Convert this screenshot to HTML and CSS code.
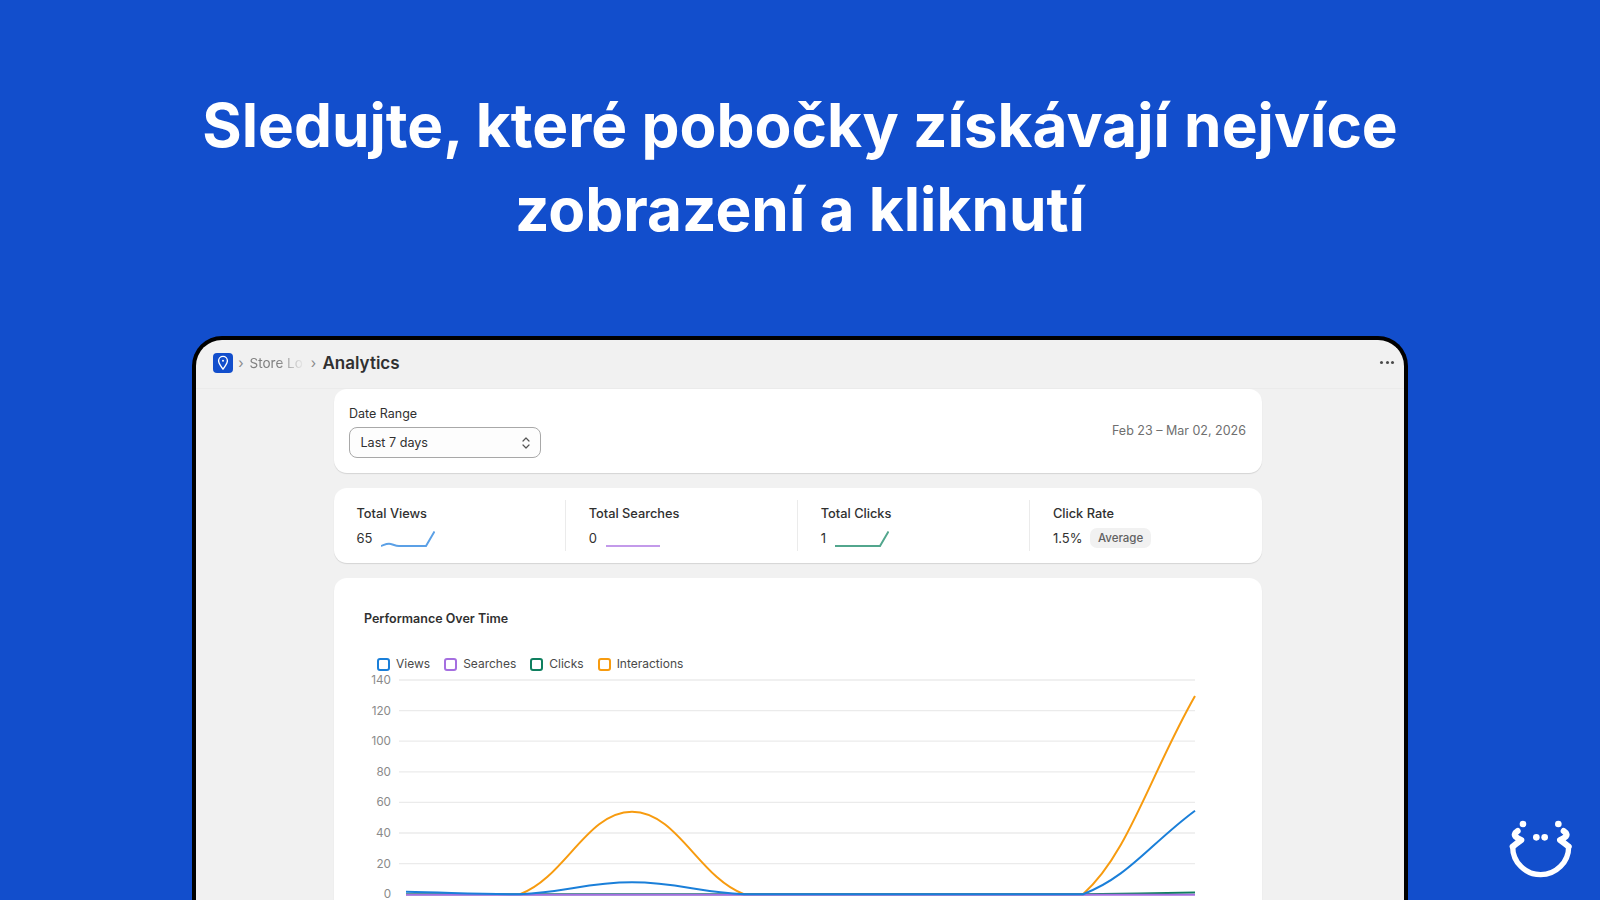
FILE: index.html
```html
<!DOCTYPE html>
<html lang="cs">
<head>
<meta charset="utf-8">
<title>Analytics</title>
<link rel="stylesheet" href="styles.css">
</head>
<body>
<h1 class="headline">Sledujte, které pobočky získávají nejvíce<br>zobrazení a kliknutí</h1>
<div class="window">
  <header class="topbar">
    <span class="app-icon">
      <svg viewBox="0 0 20 20" width="20" height="20"><path d="M10 16.2 C8 13.2 5.6 10.6 5.6 7.8 A4.4 4.4 0 0 1 14.4 7.8 C14.4 10.6 12 13.2 10 16.2 Z" fill="none" stroke="#fff" stroke-width="1.4" stroke-linejoin="round"/><circle cx="10" cy="7.8" r="1" fill="#fff"/></svg>
    </span>
    <span class="crumb-sep crumb-sep-first">›</span>
    <span class="crumb">Store Lo</span>
    <span class="crumb-sep">›</span>
    <span class="crumb-current">Analytics</span>
    <span class="more"><i></i><i></i><i></i></span>
  </header>
  <main class="content">
    <section class="card date-card">
      <div>
        <div class="field-label">Date Range</div>
        <div class="select">
          <span>Last 7 days</span>
          <svg viewBox="0 0 10 16" width="10" height="16"><path d="M2 6 L5 3 L8 6 M2 10 L5 13 L8 10" fill="none" stroke="#555" stroke-width="1.2" stroke-linecap="round" stroke-linejoin="round"/></svg>
        </div>
      </div>
      <div class="date-text">Feb 23 – Mar 02, 2026</div>
    </section>
    <section class="card stats">
      <div class="stat">
        <div class="stat-title">Total Views</div>
        <div class="stat-row"><span>65</span>
          <svg class="spark" viewBox="0 0 54 16" width="54" height="16"><path d="M0 15 C3 14 5 12.8 8 12.8 C11 12.8 14 15 18 15 L45 15 L53.5 0.5" fill="none" stroke="#5ba0e6" stroke-width="2"/></svg>
        </div>
      </div>
      <div class="stat">
        <div class="stat-title">Total Searches</div>
        <div class="stat-row"><span>0</span>
          <svg class="spark" viewBox="0 0 54 16" width="54" height="16"><path d="M0 15 L54 15" fill="none" stroke="#c39aea" stroke-width="2"/></svg>
        </div>
      </div>
      <div class="stat">
        <div class="stat-title">Total Clicks</div>
        <div class="stat-row"><span>1</span>
          <svg class="spark" viewBox="0 0 54 16" width="54" height="16"><path d="M0 15 L45 15 L53.5 0.5" fill="none" stroke="#52a68d" stroke-width="2"/></svg>
        </div>
      </div>
      <div class="stat">
        <div class="stat-title">Click Rate</div>
        <div class="stat-row"><span>1.5%</span><span class="badge">Average</span></div>
      </div>
    </section>
    <section class="card chart-card">
      <h2 class="chart-title">Performance Over Time</h2>
      <div class="legend">
        <span class="legend-item"><i class="box box-views"></i><span class="legend-text">Views</span></span>
        <span class="legend-item"><i class="box box-searches"></i><span class="legend-text">Searches</span></span>
        <span class="legend-item"><i class="box box-clicks"></i><span class="legend-text">Clicks</span></span>
        <span class="legend-item"><i class="box box-inter"></i><span class="legend-text">Interactions</span></span>
      </div>
      <svg class="chart" viewBox="334 672 929 240" width="929" height="240">
        <g class="grid">
          <path d="M399 680H1195M399 710.6H1195M399 741.2H1195M399 771.8H1195M399 802.4H1195M399 833H1195M399 863.6H1195"/>
        </g>
        <g class="ticks">
          <text x="391" y="680">140</text>
          <text x="391" y="710.6">120</text>
          <text x="391" y="741.2">100</text>
          <text x="391" y="771.8">80</text>
          <text x="391" y="802.4">60</text>
          <text x="391" y="833">40</text>
          <text x="391" y="863.6">20</text>
          <text x="391" y="894.2">0</text>
        </g>
        <path class="line l-inter" d="M520 894.2 C565 877.6 587 811.7 632 811.7 C677 811.7 699 877.6 744 894.2 L1083 894.2 C1128 854.4 1150 775 1195 696"/>
        <path class="line l-clicks" d="M406 894.2 L1083 894.2 C1128 893.8 1150 893 1195 892.6"/>
        <path class="line l-search" d="M406 894.8 L1195 894.8"/>
        <path class="line l-views" d="M406 891.7 C452 892.6 475 894.2 520 894.2 C565 892.3 587 882.3 632 882.3 C677 882.3 699 892.3 744 894.2 L1083 894.2 C1128 877.3 1150 844 1195 810.7"/>
      </svg>
    </section>
  </main>
</div>
<svg class="brand" viewBox="0 0 360 300" width="120" height="100">
  <circle cx="129" cy="72" r="10" fill="#fff"/>
  <circle cx="235" cy="72" r="10" fill="#fff"/>
  <circle cx="169" cy="112" r="10" fill="#fff"/>
  <circle cx="194" cy="112" r="10" fill="#fff"/>
  <path d="M98 140 A84 84 0 0 0 266 140" fill="none" stroke="#fff" stroke-width="16" stroke-linecap="round"/>
  <path d="M113 93 Q100 102 106 109 Q112 115 124 120 Q110 130 98 140 M251 93 Q264 102 258 109 Q252 115 240 120 Q254 130 266 140" fill="none" stroke="#fff" stroke-width="18" stroke-linecap="round" stroke-linejoin="round"/>
</svg>
</body>
</html>
```
FILE: styles.css
```css
* { box-sizing: border-box; }
html, body { height: 100%; }
body {
  margin: 0;
  height: 900px;
  overflow: hidden;
  position: relative;
  background: #124ecc;
  font-family: Inter, "Liberation Sans", sans-serif;
  color: #303030;
}
.headline {
  margin: 0;
  padding-top: 84px;
  text-align: center;
  color: #fff;
  font-size: 60.3px;
  line-height: 84px;
  font-weight: 700;
}
.window {
  width: 1216px;
  height: 640px;
  margin: 84px auto 0;
  border: 4px solid #000;
  border-bottom: 0;
  border-radius: 30px 30px 0 0;
  background: #f1f1f1;
  overflow: hidden;
}
.topbar {
  height: 49px;
  display: flex;
  align-items: center;
  padding: 0 10px 3px 16.5px;
  border-bottom: 1px solid #ebebeb;
}
.app-icon {
  width: 20px;
  height: 20px;
  border-radius: 4px;
  background: #124ecc;
  display: flex;
}
.crumb-sep {
  width: 18px;
  text-align: center;
  color: #8a8a8a;
  font-size: 14px;
  line-height: 14px;
}
.crumb-sep-first { width: 17px; }
.crumb {
  width: 55px;
  overflow: hidden;
  white-space: nowrap;
  color: #808080;
  font-size: 13.5px;
  -webkit-mask-image: linear-gradient(90deg, #000 50%, transparent 100%);
  mask-image: linear-gradient(90deg, #000 50%, transparent 100%);
}
.crumb-current {
  font-size: 17px;
  font-weight: 600;
  color: #303030;
}
.more {
  margin-left: auto;
  display: flex;
  gap: 2.5px;
}
.more i {
  width: 3px;
  height: 3px;
  border-radius: 50%;
  background: #4a4a4a;
}
.content {
  width: 928.5px;
  margin-left: 137.5px;
  display: flex;
  flex-direction: column;
  gap: 15px;
}
.card {
  background: #fff;
  border-radius: 13px;
  box-shadow: 0 1px 1px rgba(0, 0, 0, .12);
}
.date-card {
  height: 84px;
  padding: 16px 16px 0 15.5px;
  display: flex;
  justify-content: space-between;
  align-items: flex-start;
}
.field-label {
  font-size: 12.5px;
  line-height: 18px;
  color: #303030;
}
.select {
  width: 192px;
  height: 31px;
  margin-top: 4px;
  padding: 0 9px 0 10.5px;
  display: flex;
  align-items: center;
  justify-content: space-between;
  border: 1px solid #a8a8a8;
  border-radius: 8px;
  background: #fdfdfd;
  font-size: 12.6px;
}
.select span { margin-top: -1px; }
.date-text {
  margin-top: 17px;
  font-size: 12.5px;
  line-height: 18px;
  color: #6f6f6f;
}
.stats {
  height: 75px;
  padding: 12px 0;
  display: grid;
  grid-template-columns: repeat(4, 1fr);
}
.stat {
  padding-left: 23px;
  border-right: 1px solid #ebebeb;
}
.stat:last-child { border-right: 0; }
.stat-title {
  font-size: 12.8px;
  line-height: 18px;
  font-weight: 500;
  color: #303030;
  margin-top: 5px;
}
.stat-row {
  margin-top: 6px;
  height: 18px;
  display: flex;
  align-items: center;
  font-size: 13px;
  color: #303030;
}
.spark {
  margin-left: 9px;
  margin-top: 2px;
  flex: none;
}
.badge {
  margin-left: 8px;
  margin-bottom: 1px;
  padding: 0 7.5px;
  height: 20px;
  line-height: 20px;
  border-radius: 7px;
  background: #f1f1f1;
  color: #616161;
  font-size: 11.5px;
  font-weight: 500;
}
.chart-card {
  height: 400px;
  padding: 0;
}
.chart-title {
  margin: 0;
  padding: 32px 0 0 30.5px;
  font-size: 12.5px;
  line-height: 18px;
  font-weight: 600;
  color: #303030;
}
.legend {
  margin: 28px 0 0 43.5px;
  height: 16px;
  display: flex;
  align-items: center;
  gap: 14px;
  font-size: 12px;
  color: #4a4a4a;
}
.legend-item {
  display: flex;
  align-items: center;
  gap: 6px;
}
.legend-text { margin-top: -2px; }
.box {
  width: 13px;
  height: 13px;
  border: 2px solid;
  border-radius: 3px;
}
.box-views { border-color: #1a7fd9; }
.box-searches { border-color: #a56fe0; }
.box-clicks { border-color: #0f7f5f; }
.box-inter { border-color: #f79b0f; }
.chart { display: block; }
.grid path {
  fill: none;
  stroke: #ebebeb;
  stroke-width: 1.3;
}
.ticks text {
  font-size: 11.7px;
  fill: #8a8a8a;
  text-anchor: end;
  dominant-baseline: central;
}
.line {
  fill: none;
  stroke-width: 2;
}
.l-inter { stroke: #f79b0f; }
.l-clicks { stroke: #0f7f5f; }
.l-search { stroke: #a56fe0; }
.l-views { stroke: #1a7fd9; }
.brand {
  position: absolute;
  right: 0;
  bottom: 0;
}
```
